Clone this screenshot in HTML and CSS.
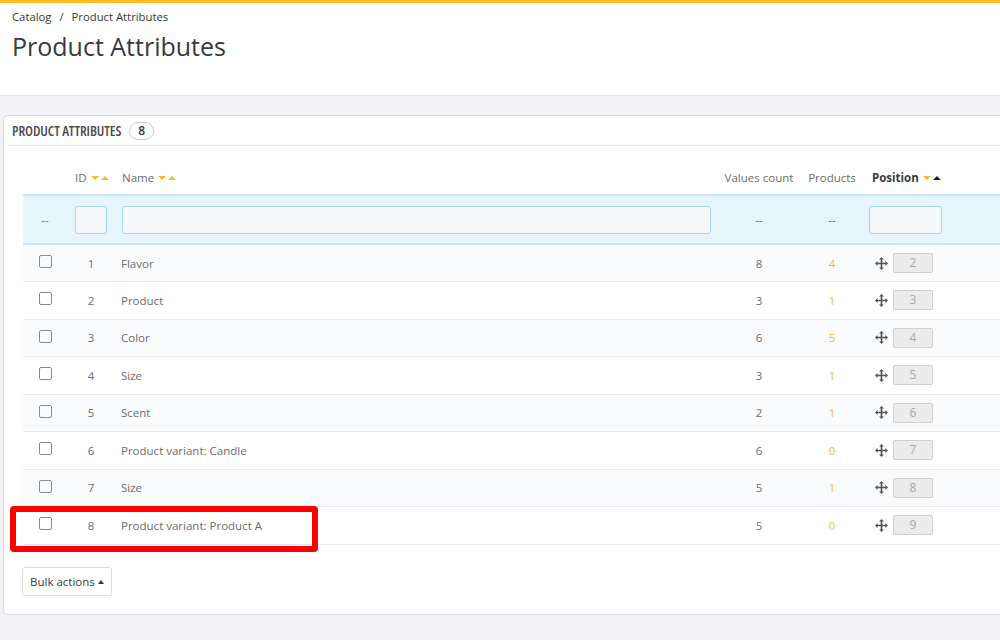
FILE: index.html
```html
<!DOCTYPE html>
<html lang="en">
<head>
    <meta charset="UTF-8">
    <meta name="viewport" content="width=device-width, initial-scale=1.0">
    <title>Product Attributes</title>
    <link rel="stylesheet" href="styles.css">
</head>
<body>
    <div class="pageHead">
        <div class="breadcrumb">Catalog <span class="sep">/</span> Product Attributes</div>
        <h1 class="pageTitle">Product Attributes</h1>
    </div>
    <div class="content">
        <div class="panel">
            <div class="panelHeading">
                <span class="panelTitle">Product Attributes</span>
                <span class="badge">8</span>
            </div>
            <table class="grid">
                <colgroup>
                    <col class="cCheck">
                    <col class="cId">
                    <col class="cName">
                    <col class="cCount">
                    <col class="cProducts">
                    <col class="cPos">
                    <col>
                </colgroup>
                <thead>
                    <tr class="heads">
                        <th></th>
                        <th class="left">ID <i class="down"></i><i class="up"></i></th>
                        <th class="left">Name <i class="down"></i><i class="up"></i></th>
                        <th>Values count</th>
                        <th>Products</th>
                        <th class="left active">Position <i class="down"></i><i class="up dark"></i></th>
                        <th></th>
                    </tr>
                    <tr class="filters">
                        <td>--</td>
                        <td><input class="fId" type="text"></td>
                        <td class="left"><input class="fName" type="text"></td>
                        <td>--</td>
                        <td>--</td>
                        <td class="left"><input class="fPos" type="text"></td>
                        <td></td>
                    </tr>
                </thead>
                <tbody id="rows"></tbody>
            </table>
            <div class="highlight"></div>
            <div class="footer">
                <button class="bulk">Bulk actions <i class="caret"></i></button>
            </div>
        </div>
    </div>
    <script>
        var attributes = [
            [1, "Flavor", 8, 4],
            [2, "Product", 3, 1],
            [3, "Color", 6, 5],
            [4, "Size", 3, 1],
            [5, "Scent", 2, 1],
            [6, "Product variant: Candle", 6, 0],
            [7, "Size", 5, 1],
            [8, "Product variant: Product A", 5, 0]
        ];
        var moveIcon = '<svg class="move" viewBox="0 0 14 14" width="13" height="13"><path d="M7 0 L9.6 2.8 H7.9 V6.1 H11.2 V4.4 L14 7 L11.2 9.6 V7.9 H7.9 V11.2 H9.6 L7 14 L4.4 11.2 H6.1 V7.9 H2.8 V9.6 L0 7 L2.8 4.4 V6.1 H6.1 V2.8 H4.4 Z" fill="#555"/></svg>';
        var html = '';
        attributes.forEach(function(a, i){
            html += '<tr class="' + (i % 2 === 0 ? 'odd' : '') + '">' +
                '<td><span class="check"></span></td>' +
                '<td>' + a[0] + '</td>' +
                '<td class="left">' + a[1] + '</td>' +
                '<td>' + a[2] + '</td>' +
                '<td class="yellow">' + a[3] + '</td>' +
                '<td class="left"><span class="pos">' + moveIcon + '<span class="posBox">' + (a[0] + 1) + '</span></span></td>' +
                '<td></td>' +
                '</tr>';
        });
        document.querySelector('#rows').innerHTML = html;
    </script>
</body>
</html>
```

FILE: styles.css
```css
html, body{
    overflow: hidden;
}
body{
    margin: 0;
    background: #f2f2f7;
    font-family: "Open Sans", "Liberation Sans", sans-serif;
    color: #363a41;
}
.pageHead{
    background: #fff;
    border-top: 3px solid #fbbb22;
    border-bottom: 1px solid #e3e3ea;
    height: 96px;
    padding: 0 12px;
    box-sizing: border-box;
}
.breadcrumb{
    font-size: 11.3px;
    padding-top: 5px;
    line-height: 17px;
}
.breadcrumb .sep{
    margin: 0 5px;
}
.pageTitle{
    margin: 4px 0 0;
    font-size: 25px;
    font-weight: 400;
    line-height: 34px;
}
.content{
    padding: 19px 0 0 3px;
}
.panel{
    position: relative;
    width: 1020px;
    background: #fff;
    border: 1px solid #dcdbe4;
    border-radius: 5px;
    box-shadow: 0 1px 2px rgba(0,0,0,0.06);
    padding: 0 0 18px;
}
.panelHeading{
    display: flex;
    align-items: center;
    height: 29px;
    margin: 0 4px;
    padding: 0 5px 0 4px;
    border-bottom: 1px solid #e8e8ec;
}
.panelTitle{
    text-transform: uppercase;
    font-size: 14px;
    font-weight: 600;
    font-stretch: 75%;
    letter-spacing: -0.1px;
    color: #4c4c52;
}
.badge{
    margin-left: 8px;
    border: 1px solid #c8c8cf;
    border-radius: 10px;
    padding: 0 8px;
    font-size: 12px;
    font-weight: 600;
    line-height: 16px;
    color: #363a41;
}
.grid{
    margin: 15px 0 0 19px;
    width: 1000px;
    border-collapse: collapse;
    table-layout: fixed;
    font-size: 11.5px;
    color: #6c6c6c;
}
.cCheck{ width: 44px; }
.cId{ width: 48px; }
.cName{ width: 602px; }
.cCount{ width: 84px; }
.cProducts{ width: 62px; }
.cPos{ width: 88px; }
.grid th, .grid td{
    text-align: center;
    padding: 0;
}
.grid .left{
    text-align: left;
    padding-left: 7px;
}
.heads th{
    height: 33px;
    font-weight: 400;
    color: #6c6c6c;
    white-space: nowrap;
}
.heads th.left{
    padding-left: 7px;
}
.heads th:nth-child(2){
    padding-left: 8px;
}
.heads th.active{
    font-weight: 700;
    color: #363a41;
    padding-left: 9px;
}
.down, .up{
    display: inline-block;
    width: 0;
    height: 0;
    border-left: 4px solid transparent;
    border-right: 4px solid transparent;
    vertical-align: 2px;
}
.down{
    border-top: 4px solid #fbbb22;
    margin-left: 1px;
}
.up{
    border-bottom: 4px solid #fbbb22;
    margin-left: 2px;
}
.up.dark{
    border-bottom-color: #222;
}
.filters td{
    background: #e6f4fc;
    border-top: 2px solid #c6e5f5;
    border-bottom: 2px solid #c6e5f5;
    height: 47px;
    color: #6c6c6c;
}
.filters input{
    display: block;
    height: 28px;
    box-sizing: border-box;
    border: 1px solid #a7d5ec;
    border-radius: 3px;
    background: #f5f8fa;
}
.filters .fId{
    width: 32px;
    margin-left: 8px;
}
.filters .fName{
    width: 589px;
}
.filters .fPos{
    width: 73px;
    margin-left: -1px;
}
.filters td.left:nth-child(6){
    padding-left: 7px;
}
#rows tr{
    height: 37.5px;
    border-bottom: 1px solid #ebebef;
}
#rows tr.odd{
    background: #fafbfc;
}
#rows td{
    color: #6c6c6c;
}
#rows td.yellow{
    color: #fbbb22;
}
#rows td:nth-child(3){
    padding-left: 6px;
}
.check{
    display: inline-block;
    width: 11px;
    height: 11px;
    border: 1px solid #8a8a8a;
    border-radius: 2px;
    vertical-align: middle;
    margin-top: -6px;
}
.pos{
    display: flex;
    align-items: center;
    gap: 5px;
    padding-left: 5px;
}
.posBox{
    display: inline-block;
    width: 40px;
    height: 20px;
    box-sizing: border-box;
    border: 1px solid #cfcfcf;
    border-radius: 2px;
    background: #ececec;
    text-align: center;
    line-height: 18px;
    font-size: 12px;
    color: #a8a8a8;
}
.highlight{
    position: absolute;
    left: 6px;
    top: 390px;
    width: 296px;
    height: 34px;
    border: 6px solid #ff0000;
    border-radius: 4px;
}
.footer{
    padding: 22px 0 0 18px;
}
.bulk{
    font-family: inherit;
    font-size: 11.5px;
    color: #363a41;
    background: #fff;
    border: 1px solid #dcdcdc;
    border-radius: 3px;
    height: 29px;
    padding: 0 7px;
}
.caret{
    display: inline-block;
    width: 0;
    height: 0;
    border-left: 3.5px solid transparent;
    border-right: 3.5px solid transparent;
    border-bottom: 4px solid #363a41;
    vertical-align: 2px;
}
```
